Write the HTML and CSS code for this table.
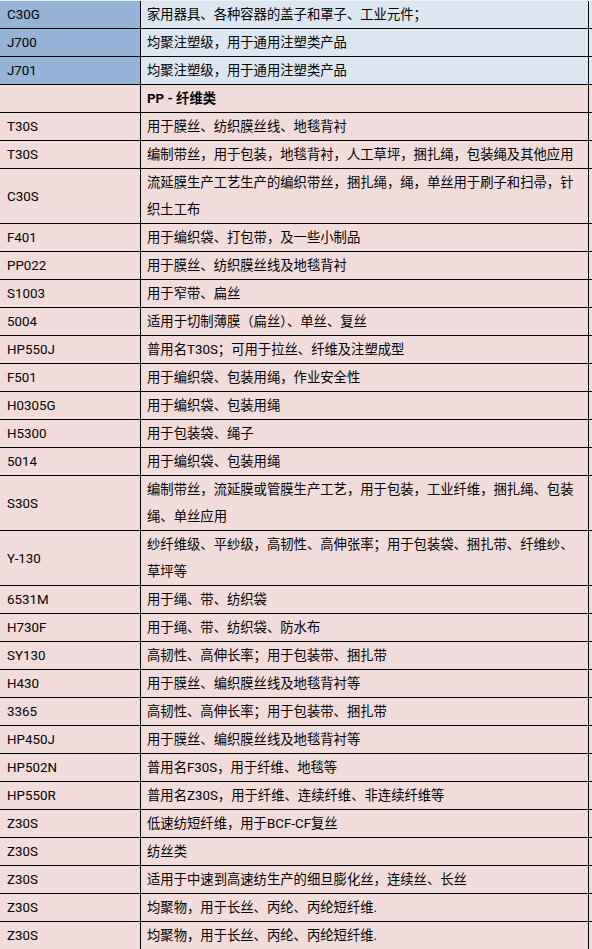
FILE: index.html
```html
<!DOCTYPE html>
<html lang="zh-CN">
<head>
<meta charset="utf-8">
<title>PP 牌号</title>
<link rel="stylesheet" href="styles.css">
</head>
<body>
<div class="sheet">
  <div class="row blue"><div class="name">C30G</div><div class="desc">家用器具、各种容器的盖子和罩子、工业元件；</div><div class="tail"></div></div>
  <div class="row blue"><div class="name">J700</div><div class="desc">均聚注塑级，用于通用注塑类产品</div><div class="tail"></div></div>
  <div class="row blue"><div class="name">J701</div><div class="desc">均聚注塑级，用于通用注塑类产品</div><div class="tail"></div></div>
  <div class="row"><div class="name"></div><div class="desc bold">PP - 纤维类</div><div class="tail"></div></div>
  <div class="row"><div class="name">T30S</div><div class="desc">用于膜丝、纺织膜丝线、地毯背衬</div><div class="tail"></div></div>
  <div class="row"><div class="name">T30S</div><div class="desc">编制带丝，用于包装，地毯背衬，人工草坪，捆扎绳，包装绳及其他应用</div><div class="tail"></div></div>
  <div class="row"><div class="name">C30S</div><div class="desc">流延膜生产工艺生产的编织带丝，捆扎绳，绳，单丝用于刷子和扫帚，针<br>织土工布</div><div class="tail"></div></div>
  <div class="row"><div class="name">F401</div><div class="desc">用于编织袋、打包带，及一些小制品</div><div class="tail"></div></div>
  <div class="row"><div class="name">PP022</div><div class="desc">用于膜丝、纺织膜丝线及地毯背衬</div><div class="tail"></div></div>
  <div class="row"><div class="name">S1003</div><div class="desc">用于窄带、扁丝</div><div class="tail"></div></div>
  <div class="row"><div class="name">5004</div><div class="desc">适用于切制薄膜（扁丝）、单丝、复丝</div><div class="tail"></div></div>
  <div class="row"><div class="name">HP550J</div><div class="desc">普用名T30S；可用于拉丝、纤维及注塑成型</div><div class="tail"></div></div>
  <div class="row"><div class="name">F501</div><div class="desc">用于编织袋、包装用绳，作业安全性</div><div class="tail"></div></div>
  <div class="row"><div class="name">H0305G</div><div class="desc">用于编织袋、包装用绳</div><div class="tail"></div></div>
  <div class="row"><div class="name">H5300</div><div class="desc">用于包装袋、绳子</div><div class="tail"></div></div>
  <div class="row"><div class="name">5014</div><div class="desc">用于编织袋、包装用绳</div><div class="tail"></div></div>
  <div class="row"><div class="name">S30S</div><div class="desc">编制带丝，流延膜或管膜生产工艺，用于包装，工业纤维，捆扎绳、包装<br>绳、单丝应用</div><div class="tail"></div></div>
  <div class="row"><div class="name">Y-130</div><div class="desc">纱纤维级、平纱级，高韧性、高伸张率；用于包装袋、捆扎带、纤维纱、<br>草坪等</div><div class="tail"></div></div>
  <div class="row"><div class="name">6531M</div><div class="desc">用于绳、带、纺织袋</div><div class="tail"></div></div>
  <div class="row"><div class="name">H730F</div><div class="desc">用于绳、带、纺织袋、防水布</div><div class="tail"></div></div>
  <div class="row"><div class="name">SY130</div><div class="desc">高韧性、高伸长率；用于包装带、捆扎带</div><div class="tail"></div></div>
  <div class="row"><div class="name">H430</div><div class="desc">用于膜丝、编织膜丝线及地毯背衬等</div><div class="tail"></div></div>
  <div class="row"><div class="name">3365</div><div class="desc">高韧性、高伸长率；用于包装带、捆扎带</div><div class="tail"></div></div>
  <div class="row"><div class="name">HP450J</div><div class="desc">用于膜丝、编织膜丝线及地毯背衬等</div><div class="tail"></div></div>
  <div class="row"><div class="name">HP502N</div><div class="desc">普用名F30S，用于纤维、地毯等</div><div class="tail"></div></div>
  <div class="row"><div class="name">HP550R</div><div class="desc">普用名Z30S，用于纤维、连续纤维、非连续纤维等</div><div class="tail"></div></div>
  <div class="row"><div class="name">Z30S</div><div class="desc">低速纺短纤维，用于BCF-CF复丝</div><div class="tail"></div></div>
  <div class="row"><div class="name">Z30S</div><div class="desc">纺丝类</div><div class="tail"></div></div>
  <div class="row"><div class="name">Z30S</div><div class="desc">适用于中速到高速纺生产的细旦膨化丝，连续丝、长丝</div><div class="tail"></div></div>
  <div class="row"><div class="name">Z30S</div><div class="desc">均聚物，用于长丝、丙纶、丙纶短纤维.</div><div class="tail"></div></div>
  <div class="row"><div class="name">Z30S</div><div class="desc">均聚物，用于长丝、丙纶、丙纶短纤维.</div><div class="tail"></div></div>
</div>
</body>
</html>
```

FILE: styles.css
```css
* {
  box-sizing: border-box;
}

body {
  margin: 0;
  background: #ffffff;
  font-family: Roboto, "Noto Sans CJK SC", sans-serif;
  font-size: 13.33px;
  color: #000000;
}

.sheet {
  width: 592px;
  border-top: 1px solid #eef2f8;
}

.row {
  display: flex;
  background: #f2dcdb;
  border-bottom: 1px solid #000000;
  line-height: 27px;
}

.row.blue {
  background: #dce6f1;
}

.row.blue .name {
  background: #95b3d7;
}

.name {
  width: 141px;
  flex: none;
  padding-left: 7px;
  border-right: 1px solid #000000;
  white-space: nowrap;
  display: flex;
  align-items: center;
}

.desc {
  width: 448px;
  flex: none;
  padding-left: 6px;
  border-right: 1px solid #000000;
  white-space: nowrap;
}

.desc.bold {
  font-weight: 700;
}

.tail {
  flex: 1;
}
```
